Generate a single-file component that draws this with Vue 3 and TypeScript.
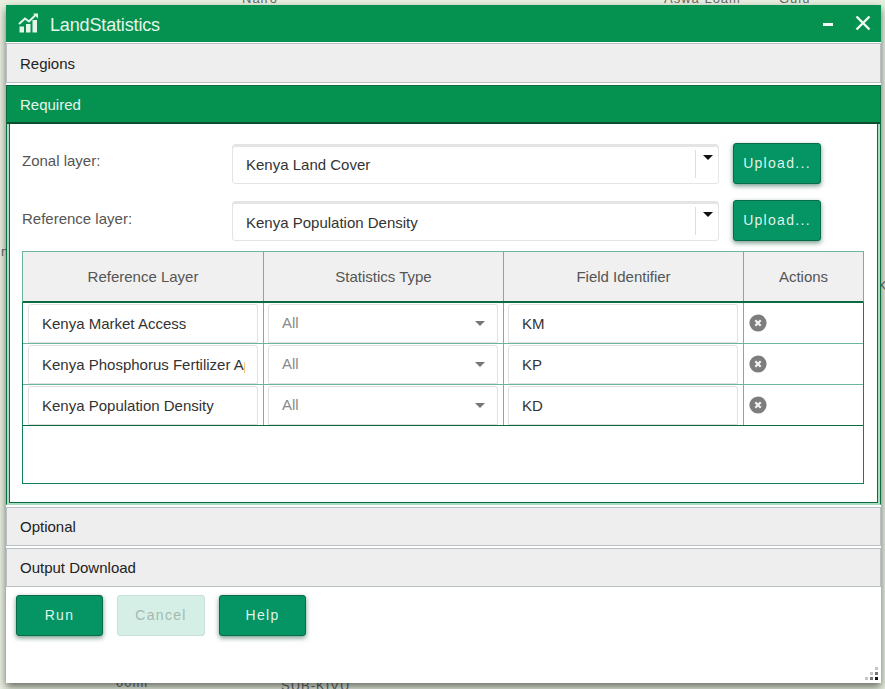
<template>
  <div class="map">
    <span class="map-label" style="left: 242px; top: -9px">Nairo</span>
    <span class="map-label" style="left: 664px; top: -9px">Aswa Loam</span>
    <span class="map-label" style="left: 779px; top: -9px">Gulu</span>
    <span class="map-label" style="left: 116px; top: 675px">00mi</span>
    <span class="map-label" style="left: 281px; top: 678px">SUB-KIVU</span>
    <span class="map-label" style="left: -3px; top: 244px">in</span>
    <span class="map-label" style="left: 878px; top: 278px">Ki</span>

    <section class="window">
      <header class="title-bar">
        <svg class="logo" viewBox="0 0 21 20" width="21" height="20" aria-hidden="true">
          <path d="M1 11 L7 5.5 L11 8.5 L17.5 2" fill="none" stroke="#e4f5ea" stroke-width="2" />
          <path d="M15 0.5 H20 V5.5 Z" fill="#e4f5ea" />
          <path d="M1.5 13.5 H6 V19.5 H1.5 Z M8 11 H12.5 V19.5 H8 Z M14.5 7 H19 V19.5 H14.5 Z" fill="#e4f5ea" />
        </svg>
        <span class="app-name">LandStatistics</span>
        <span class="win-controls">
          <span class="minimize"></span>
          <svg viewBox="0 0 16 16" width="16" height="16" aria-hidden="true">
            <path d="M1.5 1.5 L14.5 14.5 M14.5 1.5 L1.5 14.5" stroke="#f2faf5" stroke-width="2.4" fill="none" />
          </svg>
        </span>
      </header>

      <div class="section-head first">Regions</div>

      <div class="required">
        <div class="required-head">Required</div>
        <div class="required-body">
          <div v-for="f in layerFields" :key="f.label" class="form-row">
            <label class="form-label">{{ f.label }}</label>
            <div class="combo">
              <span class="combo-text">{{ f.value }}</span>
              <span class="combo-arrow"><i></i></span>
            </div>
            <button class="btn upload">Upload...</button>
          </div>

          <div class="grid">
            <div class="grid-head">
              <div v-for="h in headers" :key="h" class="cell">{{ h }}</div>
            </div>
            <div class="grid-rows">
              <div v-for="row in rows" :key="row.id" class="grid-row">
                <div class="cell"><div class="input name"><span>{{ row.layer }}</span></div></div>
                <div class="cell">
                  <div class="input select">All<i></i></div>
                </div>
                <div class="cell"><div class="input">{{ row.id }}</div></div>
                <div class="cell action">
                  <svg viewBox="0 0 18 18" width="18" height="18" aria-hidden="true">
                    <circle cx="9" cy="9" r="8.6" fill="#7d7d7d" />
                    <path d="M6.3 6.3 L11.7 11.7 M11.7 6.3 L6.3 11.7" stroke="#f4f4f4" stroke-width="2.2" />
                  </svg>
                </div>
              </div>
            </div>
          </div>
        </div>
      </div>

      <div class="section-head optional">Optional</div>
      <div class="section-head output">Output Download</div>

      <div class="actions">
        <button class="btn">Run</button>
        <button class="btn disabled">Cancel</button>
        <button class="btn">Help</button>
      </div>

      <svg class="grip" viewBox="0 0 14 14" width="14" height="14" aria-hidden="true">
        <g fill="#111">
          <rect x="11" y="11" width="3" height="3" />
        </g>
        <g fill="#777">
          <rect x="6" y="11" width="3" height="3" />
          <rect x="11" y="6" width="3" height="3" />
        </g>
        <g fill="#c4c4c4">
          <rect x="1" y="11" width="3" height="3" />
          <rect x="6" y="6" width="3" height="3" />
          <rect x="11" y="1" width="3" height="3" />
        </g>
      </svg>
    </section>
  </div>
</template>

<script setup lang="ts">
interface Row {
  layer: string;
  id: string;
}

const layerFields = [
  { label: 'Zonal layer:', value: 'Kenya Land Cover' },
  { label: 'Reference layer:', value: 'Kenya Population Density' }
];

const headers = ['Reference Layer', 'Statistics Type', 'Field Identifier', 'Actions'];

const rows: Row[] = [
  { layer: 'Kenya Market Access', id: 'KM' },
  { layer: 'Kenya Phosphorus Fertilizer App', id: 'KP' },
  { layer: 'Kenya Population Density', id: 'KD' }
];
</script>

<style>
html,
body {
  margin: 0;
  background: #e9efe2;
}
</style>

<style scoped>
.map {
  position: relative;
  width: 885px;
  height: 689px;
  overflow: hidden;
  background: #e8efdf;
  font-family: "Liberation Sans", Arial, sans-serif;
  padding: 5px 4px 0 6px;
  box-sizing: border-box;
}

.map-label {
  position: absolute;
  font-size: 13px;
  color: #666;
  letter-spacing: 1px;
}

.window {
  position: relative;
  height: 678px;
  background: #fff;
  box-shadow: 0 4px 8px rgba(0, 0, 0, 0.55);
}

.title-bar {
  display: flex;
  align-items: center;
  height: 37px;
  padding: 0 10px 0 12px;
  background: #059150;
  color: #e4f5ea;
}

.logo {
  margin: -2px 11px 0 0;
}

.app-name {
  margin-top: 3px;
  font-size: 18px;
  letter-spacing: -0.15px;
}

.win-controls {
  margin-left: auto;
  display: flex;
  align-items: center;
  gap: 22px;
}

.minimize {
  width: 10px;
  height: 3px;
  margin-top: 2px;
  background: #f2faf5;
}

.win-controls svg {
  margin-top: -2px;
}

.section-head {
  height: 39px;
  line-height: 37px;
  padding-left: 13px;
  box-sizing: border-box;
  background: #eee;
  border: 1px solid #b8c0c4;
  font-size: 15px;
  color: #222;
}

.section-head.first {
  margin-top: 1px;
  height: 40px;
  line-height: 39px;
}

.section-head.optional {
  margin-top: 2px;
}

.section-head.output {
  margin-top: 2px;
}

.required {
  margin-top: 2px;
  height: 420px;
  box-sizing: border-box;
  border: 1px solid #0b6b40;
  border-bottom-color: #a9dcc0;
  background: #a9dcc0;
  display: flex;
  flex-direction: column;
}

.required-head {
  height: 38px;
  line-height: 38px;
  padding-left: 13px;
  background: #059150;
  border-bottom: 2px solid #0a4f30;
  box-sizing: border-box;
  font-size: 15px;
  color: #e4f5ea;
}

.required-body {
  flex: 1;
  margin: 0 2px 1px;
  border: 1px solid #0b6b40;
  border-top: 0;
  background: #fff;
  padding: 19px 0 0 12px;
}

.form-row {
  display: flex;
  align-items: flex-start;
  height: 57px;
}

.form-label {
  width: 210px;
  padding-top: 10px;
  font-size: 15px;
  color: #555;
}

.form-row:first-child .form-label {
  padding-top: 9px;
}

.combo {
  display: flex;
  width: 487px;
  height: 40px;
  box-sizing: border-box;
  border: 1px solid #e4e4e4;
  border-radius: 3px;
  margin-top: 1px;
  background: #fff;
  box-shadow: inset 0 2px 0 #e4e4e4;
}

.combo-text {
  flex: 1;
  padding: 11px 0 0 13px;
  font-size: 15px;
  color: #333;
}

.form-row:nth-child(2) .combo-text {
  padding-top: 12px;
}

.combo-arrow {
  position: relative;
  width: 22px;
  margin: 5px 0 5px;
  border-left: 1px solid #ddd;
}

.combo-arrow i {
  position: absolute;
  top: 5px;
  left: 7px;
  border-left: 5px solid transparent;
  border-right: 5px solid transparent;
  border-top: 5px solid #111;
}

.btn {
  width: 87px;
  height: 41px;
  box-sizing: border-box;
  border: 1px solid #0a6b48;
  border-radius: 3px;
  background: #059463;
  color: #dff3ea;
  font-family: inherit;
  font-size: 14px;
  font-weight: 400;
  letter-spacing: 1.3px;
  box-shadow: 0 2px 5px rgba(0, 70, 40, 0.55);
  padding: 0 0 2px;
}

.btn.upload {
  width: 88px;
  margin-left: 14px;
}

.btn.disabled {
  width: 88px;
  background: #d5efe6;
  border-color: #c6e0d8;
  color: #a4b8b0;
  box-shadow: none;
}

.grid {
  width: 842px;
  height: 233px;
  box-sizing: border-box;
  border: 1px solid #14805a;
  border-top: 0;
  margin-top: -6px;
}

.grid-head,
.grid-row {
  display: grid;
  grid-template-columns: 241px 240px 240px 1fr;
}

.grid-head {
  height: 52px;
  margin: 0 -1px;
  background: #f0f0f0;
  border: 1px solid #6fb698;
  border-bottom: 2px solid #0b6b40;
  box-sizing: border-box;
}

.grid-head .cell {
  display: flex;
  align-items: center;
  justify-content: center;
  font-size: 15px;
  color: #555;
  border-right: 1px solid #6fb698;
}

.grid-head .cell:last-child,
.grid-row .cell:last-child {
  border-right: 0;
}

.grid-row {
  height: 41px;
  box-sizing: border-box;
  border-bottom: 1px solid #6fb698;
}

.grid-row:last-child {
  border-bottom-color: #0b6b40;
}

.grid-row .cell {
  border-right: 1px solid #6fb698;
  padding: 1px 5px 0 4px;
  box-sizing: border-box;
}

.grid-row .cell:first-child {
  padding-left: 5px;
}

.input {
  position: relative;
  height: 39px;
  line-height: 37px;
  box-sizing: border-box;
  padding-left: 13px;
  background: #fff;
  border: 1px solid #e0e0e0;
  border-radius: 3px 3px 0 0;
  font-size: 15px;
  color: #333;
  white-space: nowrap;
}

.input.name {
  padding-right: 12px;
}

.input.name span {
  display: block;
  overflow: hidden;
}

.input.select {
  color: #8a8a8a;
  line-height: 36px;
}

.input.select i {
  position: absolute;
  right: 12px;
  top: 16px;
  border-left: 5px solid transparent;
  border-right: 5px solid transparent;
  border-top: 5px solid #777;
}

.grid-row .cell.action {
  display: flex;
  align-items: center;
  padding: 0 0 0 5px;
}

.actions {
  display: flex;
  gap: 14px;
  padding: 8px 0 0 10px;
}

.grip {
  position: absolute;
  right: 3px;
  bottom: 3px;
}
</style>
